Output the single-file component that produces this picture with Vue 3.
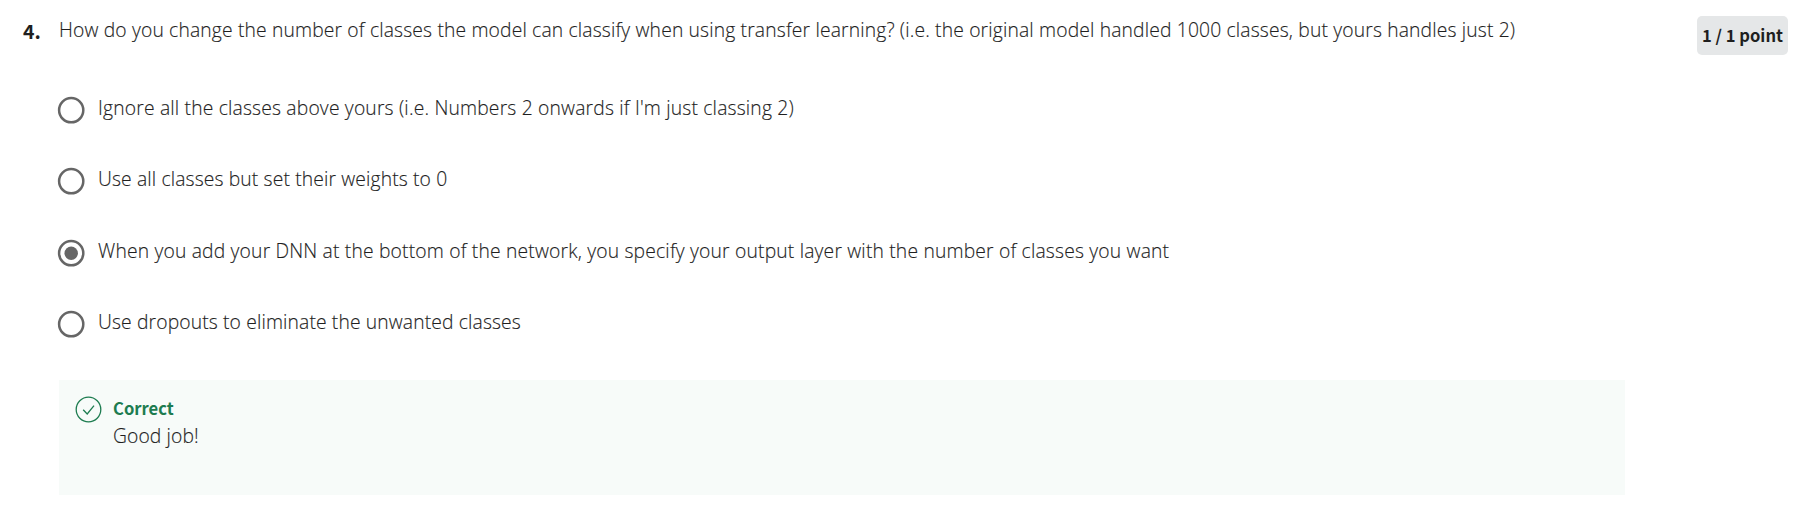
<script setup>
const options = [
  "Ignore all the classes above yours (i.e. Numbers 2 onwards if I'm just classing 2)",
  'Use all classes but set their weights to 0',
  'When you add your DNN at the bottom of the network, you specify your output layer with the number of classes you want',
  'Use dropouts to eliminate the unwanted classes',
]
const selected = 2
</script>

<template>
  <main class="page">
    <div class="number">4.</div>
    <section class="body">
      <h1 class="question">How do you change the number of classes the model can classify when using transfer learning? (i.e. the original model handled 1000 classes, but yours handles just 2)</h1>
      <div class="options">
        <div v-for="(o, i) in options" :key="i" class="option">
          <svg class="radio" width="28" height="28" viewBox="0 0 28 28">
            <circle cx="14.2" cy="14.2" r="12.1" fill="#fff" stroke="#666" stroke-width="2.5" />
            <circle v-if="i === selected" cx="14.2" cy="14.2" r="6.7" fill="#666" />
          </svg>
          <span class="label">{{ o }}</span>
        </div>
      </div>
      <div class="feedback">
        <svg class="check" width="28" height="28" viewBox="0 0 28 28" fill="none" stroke="#1d7c50" stroke-width="1.3">
          <circle cx="13.5" cy="13.5" r="12.3" />
          <path d="M8.2 13.7l4 4.2 6.8-8.3" />
        </svg>
        <div>
          <div class="correct">Correct</div>
          <div class="msg">Good job!</div>
        </div>
      </div>
    </section>
    <div class="points">1 / 1 point</div>
  </main>
</template>

<style scoped>
.page { display: flex; align-items: flex-start; box-sizing: border-box; width: 1810px; height: 520px; background: #fff; color: #1f1f1f; font-family: "Open Sans", sans-serif; font-size: 19.3px; font-weight: 350; letter-spacing: 0.1px; white-space: nowrap; }
.number { width: 36px; margin-left: 23px; padding-top: 17px; font: 700 19.5px/28px "Noto Sans CJK SC", sans-serif; letter-spacing: 0; }
.body { width: 1566px; padding-top: 16px; }
.question { margin: 0; font-size: inherit; line-height: 28px; font-weight: inherit; letter-spacing: 0.15px; }
.question, .label, .msg { -webkit-text-stroke: 0.15px #1f1f1f; }
.options { margin-top: 50px; }
.option { display: flex; height: 71.3px; letter-spacing: 0.13px; }
.option:nth-child(odd) { letter-spacing: 0.175px; }
.radio { margin: 2px 13px 0 -2px; }
.label { line-height: 28px; }
.feedback { display: flex; height: 115px; margin-top: 0.8px; background: #f7fbf9; }
.check { margin: 16px 10px 0 16px; }
.correct { margin-top: 14px; line-height: 28px; font-weight: 700; font-size: 16.6px; letter-spacing: 0; color: #1d7c50; font-family: "Noto Sans CJK SC", sans-serif; }
.msg { line-height: 28px; }
.points { margin: 16px 0 0 72px; width: 91px; height: 39px; border-radius: 5px; background: #e5e7e8; text-align: center; font: 700 16.6px/38px "Noto Sans CJK SC", sans-serif; letter-spacing: 0; }
</style>
